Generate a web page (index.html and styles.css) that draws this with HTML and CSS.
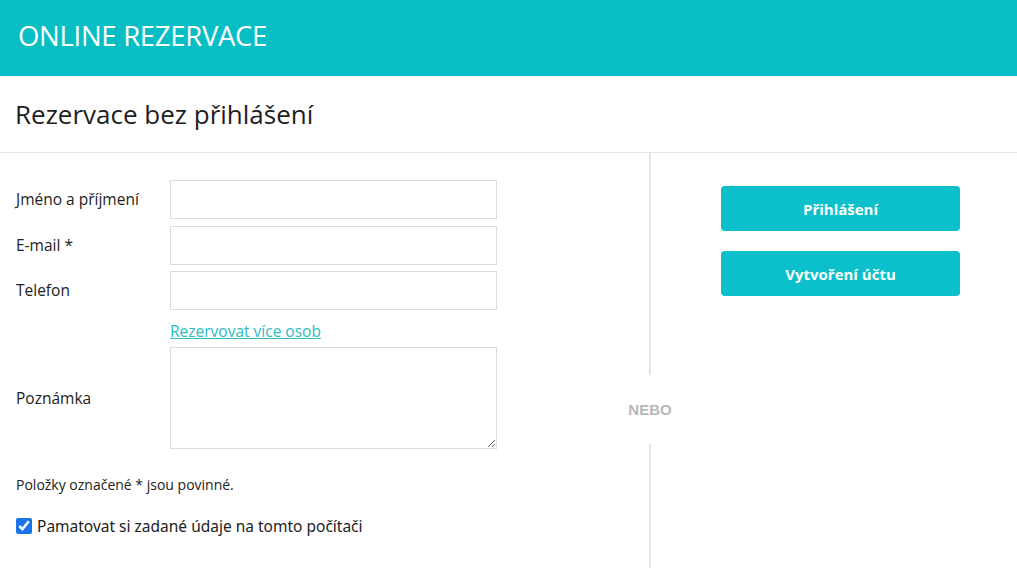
FILE: index.html
```html
<!DOCTYPE html>
<html lang="cs">
<head>
    <meta charset="UTF-8">
    <meta name="viewport" content="width=device-width, initial-scale=1.0">
    <title>Online rezervace</title>

    <!--CSS Styling-->
    <link rel="stylesheet" href="styles.css">
</head>
<body>
    <!-- Header -->
    <header class="top-bar">
        <div class="top-title">ONLINE REZERVACE</div>
    </header>

    <h1 class="page-title">Rezervace bez přihlášení</h1>

    <div class="booking">
        <!-- Guest form -->
        <form class="guest-form">
            <div class="form-row">
                <label for="name">Jméno a příjmení</label>
                <input type="text" id="name">
            </div>
            <div class="form-row">
                <label for="email">E-mail *</label>
                <input type="email" id="email">
            </div>
            <div class="form-row">
                <label for="phone">Telefon</label>
                <input type="text" id="phone">
            </div>
            <div class="form-row link-row">
                <a href="#" class="more-link">Rezervovat více osob</a>
            </div>
            <div class="form-row note-row">
                <label for="note">Poznámka</label>
                <textarea id="note"></textarea>
            </div>
            <p class="required-info">Položky označené * jsou povinné.</p>
            <label class="remember">
                <input type="checkbox" checked>
                Pamatovat si zadané údaje na tomto počítači
            </label>
        </form>

        <!-- Divider -->
        <div class="divider">
            <span class="divider-line"></span>
            <span class="divider-text">NEBO</span>
            <span class="divider-line"></span>
        </div>

        <!-- Account actions -->
        <div class="account">
            <button class="account-btn">Přihlášení</button>
            <button class="account-btn">Vytvoření účtu</button>
        </div>
    </div>
</body>
</html>
```

FILE: styles.css
```css
/* Global Styles */
body, html {
    margin: 0;
    padding: 0;
    width: 100%;
    height: 100%;
    overflow: hidden;
    font-family: "Open Sans", "Noto Sans", sans-serif;
    color: #222;
    background-color: #fff;
}

/* Header */
.top-bar {
    height: 76px;
    background-color: #08bec5;
    display: flex;
    align-items: center;
    padding-left: 18px;
}

.top-title {
    color: #fff;
    font-size: 27.5px;
    letter-spacing: -0.3px;
    margin-top: -6px;
}

/* Page title */
.page-title {
    margin: 0;
    padding: 20px 15px 0;
    height: 56px;
    font-size: 26px;
    font-weight: normal;
    color: #1e1e1e;
    border-bottom: 1px solid #e3e3e3;
}

/* Booking area */
.booking {
    display: flex;
    height: 415px;
}

.guest-form {
    width: 481px;
    padding: 27px 0 0 16px;
    margin-right: 152px;
}

.form-row {
    display: flex;
    align-items: center;
    margin-bottom: 7px;
}

.form-row:nth-child(2) {
    margin-bottom: 6px;
}

.form-row label {
    width: 154px;
    font-size: 15.5px;
    color: #222;
    margin-top: -2px;
}

.form-row input,
.form-row textarea {
    width: 327px;
    height: 39px;
    box-sizing: border-box;
    border: 1px solid #dcdcdc;
    border-radius: 0;
    padding: 6px 10px;
    font-family: inherit;
    font-size: 15px;
    margin: 0;
}

.link-row {
    padding-left: 154px;
    margin: 10px 0 5px;
}

.more-link {
    color: #2bbcc4;
    font-size: 15.5px;
    text-decoration: underline;
}

.note-row textarea {
    height: 102px;
    resize: vertical;
}

.note-row label {
    margin-top: 0;
}

.required-info {
    font-size: 14px;
    margin: 26px 0 0;
    color: #222;
}

.remember {
    display: flex;
    align-items: center;
    margin-top: 21px;
    font-size: 15.5px;
    font-family: "Noto Sans", sans-serif;
}

.remember input {
    width: 16px;
    height: 16px;
    margin: 0 5px 0 0;
    accent-color: #1a73e8;
}

/* Divider */
.divider {
    width: 2px;
    display: flex;
    flex-direction: column;
    align-items: center;
}

.divider-line {
    width: 2px;
    background-color: #e6e6e6;
    flex: 1;
}

.divider-text {
    padding: 27px 0 26px;
    font-family: "Liberation Sans", Arial, sans-serif;
    font-weight: bold;
    font-size: 15px;
    color: #b8b8b8;
    line-height: 16px;
    background: #fff;
}

.divider-line:first-child {
    flex: 0 0 222px;
}

/* Account buttons */
.account {
    display: flex;
    flex-direction: column;
    gap: 20px;
    padding: 33px 0 0 70px;
}

.account-btn {
    width: 239px;
    height: 45px;
    border: none;
    border-radius: 4px;
    background-color: #0bc0ca;
    color: #fff;
    font-family: inherit;
    font-size: 15px;
    font-weight: bold;
    cursor: pointer;
}

.account-btn:hover {
    background-color: #09aab3;
}
```
